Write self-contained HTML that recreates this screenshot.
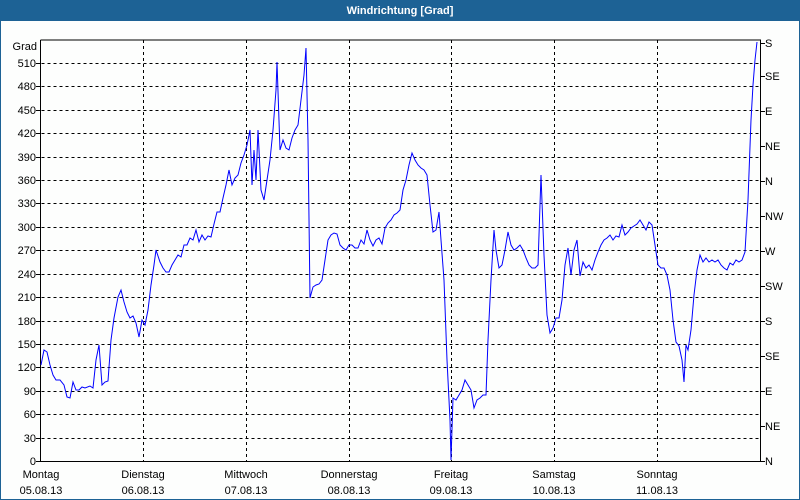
<!DOCTYPE html>
<html><head><style>
html,body{margin:0;padding:0;background:#fff}
#w{position:relative;width:798px;height:498px;border:1px solid #1d6295;background:#fdfefd;font-family:"Liberation Sans",sans-serif;font-size:11px;}
#t{position:absolute;left:0;top:0;width:798px;height:20px;background:#1d6295;color:#fff;font-weight:bold;font-size:11px;text-align:center;line-height:20px}
svg{position:absolute;left:-1px;top:-1px}
text{font-family:"Liberation Sans",sans-serif;font-size:11px;fill:#000}
</style></head><body>
<div id="w"><div id="t">Windrichtung [Grad]</div>
<svg width="800" height="500" viewBox="0 0 800 500">
<g stroke="#000" stroke-dasharray="3,3" stroke-width="1">
<path d="M41.5 63.5H760M41.5 86.5H760M41.5 110.5H760M41.5 133.5H760M41.5 157.5H760M41.5 180.5H760M41.5 203.5H760M41.5 227.5H760M41.5 250.5H760M41.5 274.5H760M41.5 297.5H760M41.5 321.5H760M41.5 344.5H760M41.5 367.5H760M41.5 391.5H760M41.5 414.5H760M41.5 438.5H760"/>
<path d="M143.5 40V461M246.5 40V461M349.5 40V461M451.5 40V461M554.5 40V461M657.5 40V461"/>
</g>
<g stroke="#000" fill="none">
<path d="M40.5 40V461.5H760.5V40H40.5"/>
<path d="M760 43.5h5M760 76.5h5M760 111.5h5M760 146.5h5M760 181.5h5M760 216.5h5M760 251.5h5M760 286.5h5M760 321.5h5M760 356.5h5M760 391.5h5M760 426.5h5M760 461.5h5"/>
<path d="M36 63.5h5M36 86.5h5M36 110.5h5M36 133.5h5M36 157.5h5M36 180.5h5M36 203.5h5M36 227.5h5M36 250.5h5M36 274.5h5M36 297.5h5M36 321.5h5M36 344.5h5M36 367.5h5M36 391.5h5M36 414.5h5M36 438.5h5M36 461.5h5"/>
</g>
<g text-anchor="end">
<text x="37" y="50">Grad</text>
<text x="36" y="67">510</text><text x="36" y="90">480</text><text x="36" y="114">450</text><text x="36" y="137">420</text><text x="36" y="161">390</text><text x="36" y="184">360</text><text x="36" y="207">330</text><text x="36" y="231">300</text><text x="36" y="254">270</text><text x="36" y="278">240</text><text x="36" y="301">210</text><text x="36" y="325">180</text><text x="36" y="348">150</text><text x="36" y="371">120</text><text x="36" y="395">90</text><text x="36" y="418">60</text><text x="36" y="442">30</text><text x="36" y="465">0</text>
</g>
<g>
<text x="765" y="47">S</text><text x="765" y="80">SE</text><text x="765" y="115">E</text><text x="765" y="150">NE</text><text x="765" y="185">N</text><text x="765" y="220">NW</text><text x="765" y="255">W</text><text x="765" y="290">SW</text><text x="765" y="325">S</text><text x="765" y="360">SE</text><text x="765" y="395">E</text><text x="765" y="430">NE</text><text x="765" y="465">N</text>
</g>
<g text-anchor="middle">
<text x="41" y="478">Montag</text><text x="41" y="494">05.08.13</text>
<text x="143" y="478">Dienstag</text><text x="143" y="494">06.08.13</text>
<text x="246" y="478">Mittwoch</text><text x="246" y="494">07.08.13</text>
<text x="349" y="478">Donnerstag</text><text x="349" y="494">08.08.13</text>
<text x="451" y="478">Freitag</text><text x="451" y="494">09.08.13</text>
<text x="554" y="478">Samstag</text><text x="554" y="494">10.08.13</text>
<text x="657" y="478">Sonntag</text><text x="657" y="494">11.08.13</text>
</g>
<polyline fill="none" stroke="#0000ff" stroke-width="1" points="41,365 44,350 47,352 50,365 53,375 56,380 60,380 64,385 67,397 70,398 73,382 76,390 79,390 82,387 85,388 90,386 93,388 96,360 99,345 102,385 105,382 108,381 111,340 114,318 118,297 121,290 124,302 127,312 130,318 133,316 136,323 139,337 142,320 145,325 148,310 151,285 154,265 156,250 160,262 163,268 166,272 169,272 172,265 175,260 178,255 181,257 184,245 187,245 190,238 193,240 196,230 199,242 202,235 205,240 208,236 211,237 214,224 217,212 220,212 223,198 226,185 229,170 232,185 235,178 238,175 241,163 244,155 247,145 250,130 252,185 254,150 256,180 258,130 261,190 264,200 267,180 270,160 273,130 276,90 277,62 280,150 283,140 286,148 289,150 292,138 295,130 298,125 301,100 304,75 306,48 308,140 310,298 313,287 316,285 319,284 322,280 325,260 328,240 331,235 334,233 337,234 340,245 343,248 346,250 349,245 352,245 355,248 358,248 361,240 364,244 367,230 370,240 373,246 376,240 379,238 382,244 385,228 388,223 391,220 394,215 397,213 400,210 403,190 406,180 409,165 412,153 415,160 418,165 421,168 424,170 427,175 430,205 433,232 436,230 439,212 441,240 444,280 447,360 450,420 451,460 453,398 456,400 459,395 462,390 465,380 468,385 471,390 474,408 477,400 480,398 483,395 486,395 488,340 491,280 494,230 496,250 499,268 502,265 505,250 508,232 511,245 514,250 517,248 520,245 523,250 526,258 529,265 532,268 535,268 538,265 541,175 544,255 547,315 550,333 553,328 556,318 559,318 562,300 565,265 568,248 571,275 574,250 577,240 580,276 583,262 586,268 589,265 592,270 595,260 598,252 601,245 604,240 607,238 610,235 613,240 616,236 619,237 622,225 625,235 628,232 631,228 634,226 637,224 640,220 643,225 646,230 649,222 652,225 655,245 658,265 661,268 664,268 667,275 670,290 673,320 676,342 679,346 682,360 684,382 686,345 688,350 691,330 694,295 697,270 700,255 703,262 706,258 709,262 712,260 715,262 718,260 721,265 724,268 727,270 730,263 733,265 736,260 739,262 742,260 745,252 748,200 751,120 753,85 755,60 757,42"/>
</svg></div>
</body></html>
